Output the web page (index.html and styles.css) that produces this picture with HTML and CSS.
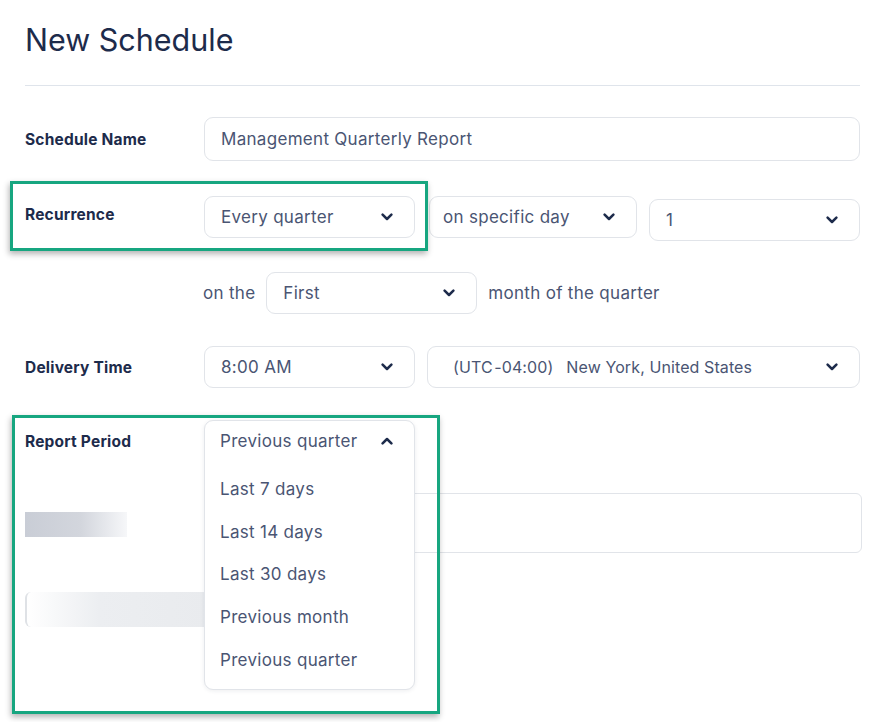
FILE: index.html
```html
<!DOCTYPE html>
<html lang="en">
<head>
    <meta charset="UTF-8">
    <meta name="viewport" content="width=device-width, initial-scale=1.0">
    <title>New Schedule</title>
    <link rel="stylesheet" href="styles.css">
</head>
<body>
    <div class="page">
        <h1 class="title">New Schedule</h1>
        <hr class="divider">

        <div class="form">
            <div class="row">
                <div class="label">Schedule Name</div>
                <div class="field field-name">Management Quarterly Report</div>
            </div>

            <div class="row row-recurrence">
                <span class="highlight highlight-recurrence"></span>
                <div class="label">Recurrence</div>
                <div class="field select">
                    <span>Every quarter</span>
                    <svg class="chevron" viewBox="0 0 12 8"><path d="M1.6 1.6 L6 6 L10.4 1.6"/></svg>
                </div>
                <div class="field select select-day">
                    <span>on specific day</span>
                    <svg class="chevron" viewBox="0 0 12 8"><path d="M1.6 1.6 L6 6 L10.4 1.6"/></svg>
                </div>
                <div class="field select select-num">
                    <span>1</span>
                    <svg class="chevron" viewBox="0 0 12 8"><path d="M1.6 1.6 L6 6 L10.4 1.6"/></svg>
                </div>
            </div>

            <div class="row row-sub">
                <span class="inline-text">on the</span>
                <div class="field select select-first">
                    <span>First</span>
                    <svg class="chevron" viewBox="0 0 12 8"><path d="M1.6 1.6 L6 6 L10.4 1.6"/></svg>
                </div>
                <span class="inline-text">month of the quarter</span>
            </div>

            <div class="row">
                <div class="label">Delivery Time</div>
                <div class="field select">
                    <span>8:00 AM</span>
                    <svg class="chevron" viewBox="0 0 12 8"><path d="M1.6 1.6 L6 6 L10.4 1.6"/></svg>
                </div>
                <div class="field select select-zone">
                    <span><span class="utc">(UTC&#8202;-04:00)</span>New York, United States</span>
                    <svg class="chevron" viewBox="0 0 12 8"><path d="M1.6 1.6 L6 6 L10.4 1.6"/></svg>
                </div>
            </div>

            <div class="row row-report">
                <span class="highlight highlight-report"></span>
                <div class="label">Report Period</div>
                <div class="dropdown-anchor">
                    <div class="dropdown">
                        <div class="dropdown-head">
                            <span>Previous quarter</span>
                            <svg class="chevron" viewBox="0 0 12 8"><path d="M1.6 6.4 L6 2 L10.4 6.4"/></svg>
                        </div>
                        <ul class="options">
                            <li>Last 7 days</li>
                            <li>Last 14 days</li>
                            <li>Last 30 days</li>
                            <li>Previous month</li>
                            <li>Previous quarter</li>
                        </ul>
                    </div>
                </div>
            </div>

            <div class="row row-hidden">
                <div class="label"><span class="blur blur-label"></span></div>
                <div class="field field-tall"></div>
            </div>

            <div class="row row-hidden2">
                <div class="label"><span class="blur blur-toggle"></span></div>
            </div>
        </div>
    </div>
</body>
</html>
```

FILE: styles.css
```css
:root {
    --navy: #1d2b4b;
    --text: #4a5573;
    --border: #e1e4e9;
    --green: #17a680;
}

body {
    margin: 0;
    font-family: Inter, "Open Sans", sans-serif;
    background: #fff;
    color: var(--text);
}

.page {
    min-height: 722px;
    box-sizing: border-box;
    padding: 20px 13px 0 25px;
}

.title {
    margin: 0;
    font-size: 30.5px;
    line-height: 40px;
    font-weight: 400;
    color: var(--navy);
}

.divider {
    margin: 25px 0 0;
    border: 0;
    border-top: 1px solid #dfe4eb;
}

.form {
    padding-top: 31px;
}

.row {
    position: relative;
    display: flex;
    align-items: center;
    gap: 12px;
    margin-bottom: 32px;
}

.label {
    width: 167px;
    flex-shrink: 0;
    font-size: 15.5px;
    font-weight: 700;
    letter-spacing: 0.2px;
    color: var(--navy);
}

.field {
    box-sizing: border-box;
    height: 42px;
    border: 1px solid var(--border);
    border-radius: 9px;
    padding: 0 16px;
    display: flex;
    align-items: center;
    font-size: 17px;
    letter-spacing: 0.3px;
    color: var(--text);
    background: #fff;
}

.field-name {
    flex: 1;
    height: 44px;
}

.select {
    width: 211px;
    justify-content: space-between;
    padding-right: 21px;
}

.chevron {
    width: 12px;
    height: 8px;
    flex-shrink: 0;
    fill: none;
    stroke: var(--navy);
    stroke-width: 2.5;
    stroke-linecap: round;
    stroke-linejoin: round;
}

.row-recurrence {
    margin-top: 35px;
    align-items: flex-start;
    margin-bottom: 31px;
}

.row-recurrence .label {
    line-height: 38px;
}

.select-day {
    width: 208px;
    margin-left: 2px;
    padding-left: 13px;
}

.select-num {
    margin-top: 3px;
}

.row-sub {
    padding-left: 178px;
    gap: 11px;
}

.inline-text {
    font-size: 17px;
    letter-spacing: 0.3px;
    color: var(--text);
}

.select-zone {
    width: 433px;
    padding-left: 25px;
    font-size: 16px;
    letter-spacing: 0.1px;
}

.utc {
    margin-right: 13px;
}

.row-report {
    height: 42px;
    z-index: 2;
    margin-bottom: 31px;
}

.dropdown-anchor {
    position: relative;
    width: 211px;
    height: 42px;
}

.dropdown {
    position: absolute;
    top: 0;
    left: 0;
    box-sizing: border-box;
    width: 211px;
    height: 270px;
    border: 1px solid var(--border);
    border-radius: 9px;
    background: #fff;
    box-shadow: 0 1px 4px rgba(30, 40, 60, 0.08);
}

.dropdown-head {
    height: 40px;
    display: flex;
    align-items: center;
    justify-content: space-between;
    padding: 0 21px 0 15px;
    font-size: 17px;
    letter-spacing: 0.3px;
}

.options {
    list-style: none;
    margin: 0;
    padding: 7px 0 0;
}

.options li {
    height: 42.7px;
    line-height: 42.7px;
    padding-left: 15px;
    font-size: 17px;
    letter-spacing: 0.3px;
}

.row-hidden {
    z-index: 1;
    margin-bottom: 39px;
}

.field-tall {
    flex: 1;
    height: 60px;
    margin-right: -2px;
    border-radius: 6px;
}

.blur {
    display: block;
}

.blur-label {
    width: 102px;
    height: 25px;
    margin-top: 3px;
    background: linear-gradient(to right, #c9cdd6 0%, #d3d6dd 55%, #f6f7f9 100%);
}

.blur-toggle {
    width: 180px;
    height: 35px;
    border-left: 2px solid #dfe2e6;
    border-radius: 6px 0 0 6px;
    background: linear-gradient(to right, #fff 0%, #eceef1 40%, #e9ebee 100%);
}

.highlight {
    position: absolute;
    box-sizing: border-box;
    border: 3px solid var(--green);
    box-shadow: -1px 3px 6px rgba(0, 0, 0, 0.3);
    z-index: 3;
    pointer-events: none;
}

.highlight-recurrence {
    left: -15px;
    top: -15px;
    width: 418px;
    height: 70px;
}

.highlight-report {
    left: -13px;
    top: -5px;
    width: 428px;
    height: 299px;
}
```
